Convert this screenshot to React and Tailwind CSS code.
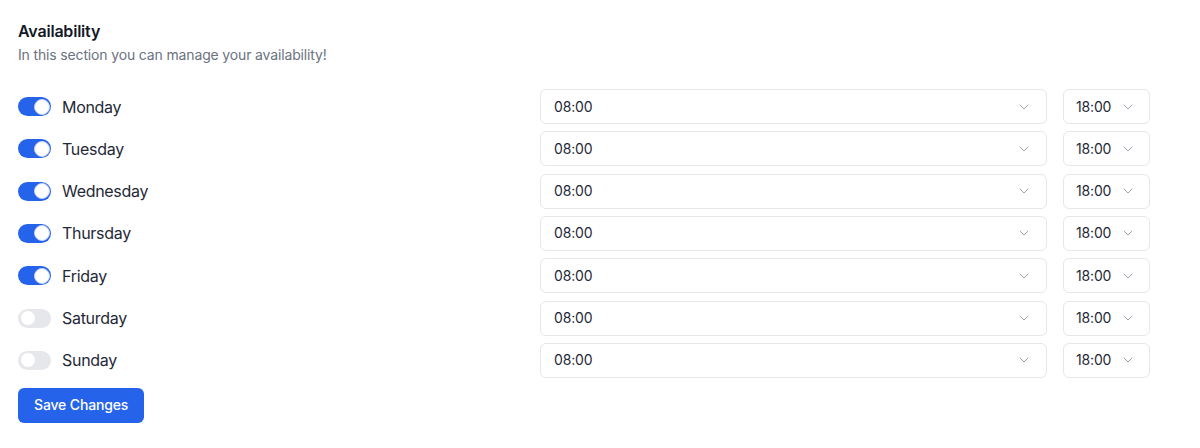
import React, { useState } from "react";

const days = [
  { name: "Monday", on: true },
  { name: "Tuesday", on: true },
  { name: "Wednesday", on: true },
  { name: "Thursday", on: true },
  { name: "Friday", on: true },
  { name: "Saturday", on: false },
  { name: "Sunday", on: false },
];

const Chevron = () => (
  <svg width="10" height="6" viewBox="0 0 10 6" fill="none">
    <path d="M1 1l4 4 4-4" stroke="#9ca3af" strokeWidth="1" strokeLinecap="round" strokeLinejoin="round" />
  </svg>
);

const Toggle = ({ on, onClick }) => (
  <button
    onClick={onClick}
    className={
      on
        ? "relative w-[33px] h-[19px] rounded-full bg-[#2563eb] shrink-0"
        : "relative w-[33px] h-[19px] rounded-full bg-[#e5e7eb] shrink-0"
    }
  >
    <span
      className={
        on
          ? "absolute top-[1.5px] left-[15.5px] w-4 h-4 rounded-full bg-white border border-[#c7d2fe]"
          : "absolute top-[1.5px] left-[1.5px] w-4 h-4 rounded-full bg-white border border-[#e5e7eb]"
      }
    />
  </button>
);

export default function App() {
  const [rows, setRows] = useState(days);

  const flip = (i) =>
    setRows(rows.map((r, j) => (j === i ? { ...r, on: !r.on } : r)));

  return (
    <div className="w-[1200px] h-[448px] bg-white pl-[18px] pt-[21px] font-['Inter',sans-serif] text-[#111827]">
      {/* HEADER */}
      <h1 className="text-base font-semibold leading-5 tracking-[-0.2px]">Availability</h1>
      <p className="mt-[4px] text-sm text-[#6b7280] leading-5 tracking-[-0.15px]">
        In this section you can manage your availability!
      </p>

      {/* ROWS */}
      <div className="mt-[24px] flex flex-col gap-[7.33px] w-[1132px]">
        {rows.map((d, i) => (
          <div key={d.name} className="flex items-center h-[35px]">
            <div className="flex items-center gap-[11px] w-[522px]">
              <Toggle on={d.on} onClick={() => flip(i)} />
              <span className="text-base text-[#1f2937] tracking-[-0.3px]">{d.name}</span>
            </div>

            <div className="w-[507px] h-[35px] rounded-md border border-[#e5e7eb] flex items-center justify-between pl-[13px] pr-[17px] text-sm text-[#1f2937] tracking-[-0.15px]">
              08:00
              <Chevron />
            </div>

            <div className="ml-4 w-[87px] h-[35px] rounded-md border border-[#e5e7eb] flex items-center justify-between pl-3 pr-[16px] text-sm text-[#1f2937] tracking-[-0.15px]">
              18:00
              <Chevron />
            </div>
          </div>
        ))}
      </div>

      {/* SAVE */}
      <button className="mt-[10px] h-[35px] px-4 rounded-md bg-[#2563eb] text-white text-sm font-medium tracking-[-0.15px]">
        Save Changes
      </button>
    </div>
  );
}
